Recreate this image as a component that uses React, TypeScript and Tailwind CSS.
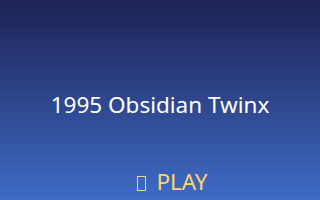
export default function App() {
  return (
    <div className="w-[320px] h-[200px] bg-gradient-to-b from-[#1d2355] to-[#3e6cc7] flex flex-col items-center overflow-hidden" style={{ fontFamily: '"Noto Sans", "Open Sans", sans-serif' }}>
      <div className="mt-[90px] text-[22.5px] leading-[30px] text-white whitespace-nowrap">1995 Obsidian Twinx</div>
      <div className="mt-[47px] ml-[25px] flex items-center text-[22.5px] leading-[30px] text-[#fbd56b] whitespace-nowrap">
        <span className="inline-block w-[9px] h-[15px] border-[1.5px] border-[#fbd56b] mr-[10px] mt-[2px]"></span>
        <span>PLAY</span>
      </div>
    </div>
  );
}
